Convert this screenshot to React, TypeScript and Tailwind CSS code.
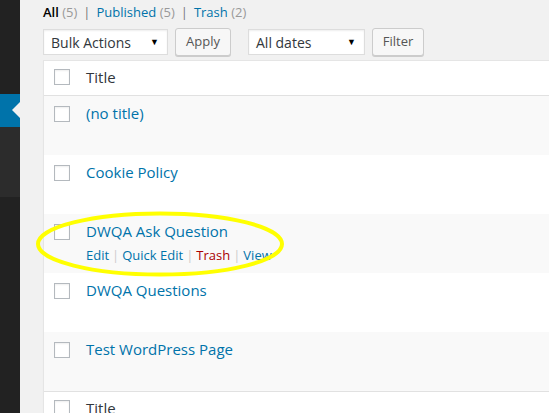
import React from 'react';

const FONT = { fontFamily: '"Open Sans", "Noto Sans", Arial, sans-serif' };

interface PageRow {
  title: string;
  alt: boolean;
  actions?: boolean;
}

const rows: PageRow[] = [
  { title: '(no title)', alt: true },
  { title: 'Cookie Policy', alt: false },
  { title: 'DWQA Ask Question', alt: true, actions: true },
  { title: 'DWQA Questions', alt: false },
  { title: 'Test WordPress Page', alt: true },
];

function Checkbox() {
  return <div className="w-[16px] h-[16px] shrink-0 border border-[#b4b9be] bg-white shadow-[inset_0_1px_2px_rgba(0,0,0,0.07)]" />;
}

function Select({ label, width }: { label: string; width: string }) {
  return (
    <div className={`${width} h-[26px] flex items-center justify-between pl-[7px] pr-[8px] bg-white border border-[#ddd] shadow-[inset_0_1px_2px_rgba(0,0,0,0.07)] text-[14px] text-[#32373c]`}>
      <span>{label}</span>
      <span className="text-[9px] text-black">▼</span>
    </div>
  );
}

function Button({ label, width }: { label: string; width: string }) {
  return (
    <div className={`${width} h-[28px] flex items-center justify-center bg-[#f7f7f7] border border-[#ccc] rounded-[3px] shadow-[0_1px_0_#ccc] text-[13px] text-[#555]`}>
      {label}
    </div>
  );
}

export default function App() {
  return (
    <div className="relative w-[549px] h-[413px] overflow-hidden flex bg-[#f1f1f1]" style={FONT}>
      {/* admin sidebar edge */}
      <div className="w-[20px] shrink-0 flex flex-col bg-[#222]">
        <div className="h-[94px] shrink-0" />
        <div className="relative h-[33px] shrink-0 bg-[#0073aa]">
          <div className="absolute right-0 top-[8px] w-0 h-0 border-y-[8px] border-y-transparent border-r-[8px] border-r-[#f1f1f1]" />
        </div>
        <div className="h-[70px] shrink-0 bg-[#2c2c2c]" />
      </div>

      {/* content */}
      <div className="flex-1 pl-[23px] flex flex-col">
        <div className="h-[28px] shrink-0 leading-[24px] text-[13px] flex items-start gap-[6px] text-[#777]">
          <span><span className="font-semibold text-black">All</span> <span className="text-[#999]">(5)</span></span>
          <span>|</span>
          <span><span className="text-[#0073aa]">Published</span> <span className="text-[#999]">(5)</span></span>
          <span>|</span>
          <span><span className="text-[#0073aa]">Trash</span> <span className="text-[#999]">(2)</span></span>
        </div>

        <div className="h-[28px] shrink-0 flex items-center">
          <Select label="Bulk Actions" width="w-[125px]" />
          <div className="ml-[7px]">
            <Button label="Apply" width="w-[56px]" />
          </div>
          <div className="ml-[17px]">
            <Select label="All dates" width="w-[117px]" />
          </div>
          <div className="ml-[7px]">
            <Button label="Filter" width="w-[52px]" />
          </div>
        </div>

        <div className="mt-[4px] w-[540px] shrink-0 border border-[#e5e5e5] bg-white shadow-[0_1px_1px_rgba(0,0,0,0.04)]">
          <div className="h-[35px] flex items-start pt-[8px] pl-[10px] border-b border-[#e1e1e1]">
            <Checkbox />
            <span className="ml-[16px] -mt-[1px] text-[15px] leading-[18px] text-[#32373c]">Title</span>
          </div>

          {rows.map((r) => (
            <div key={r.title} className={`h-[59px] flex items-start pt-[10px] pl-[10px] ${r.alt ? 'bg-[#f9f9f9]' : 'bg-white'}`}>
              <Checkbox />
              <div className="ml-[16px] -mt-[2px] flex flex-col">
                <span className="text-[15px] leading-[18px] text-[#0073aa]">{r.title}</span>
                {r.actions && (
                  <div className="mt-[6px] text-[13px] leading-[18px] flex items-center gap-[3px] text-[#ccc]">
                    <span className="text-[#0073aa]">Edit</span>
                    <span>|</span>
                    <span className="text-[#0073aa]">Quick Edit</span>
                    <span>|</span>
                    <span className="text-[#a00]">Trash</span>
                    <span>|</span>
                    <span className="text-[#0073aa]">View</span>
                  </div>
                )}
              </div>
            </div>
          ))}

          <div className="h-[40px] flex items-start pt-[8px] pl-[10px] border-t border-[#e1e1e1]">
            <Checkbox />
            <span className="ml-[16px] -mt-[1px] text-[15px] leading-[18px] text-[#32373c]">Title</span>
          </div>
        </div>
      </div>

      {/* yellow highlight annotation */}
      <svg className="absolute left-[35px] top-[210px]" width="252" height="68" viewBox="0 0 252 68">
        <ellipse cx="125" cy="34" rx="122" ry="30.5" fill="none" stroke="#ffff00" strokeWidth="4" />
      </svg>
    </div>
  );
}
